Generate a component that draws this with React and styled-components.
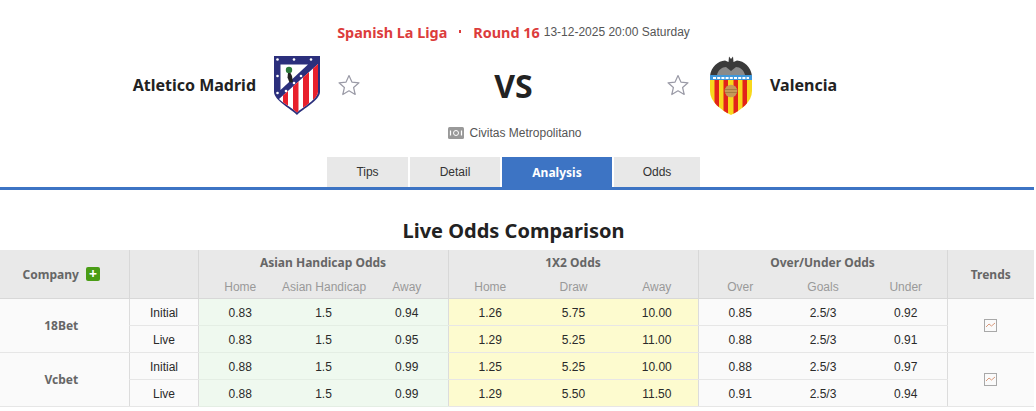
import React from 'react';
import styled, { createGlobalStyle } from 'styled-components';

const GlobalStyle = createGlobalStyle`
  html, body {
    margin: 0;
    padding: 0;
    background: #fff;
  }
  body {
    font-family: "Liberation Sans", Arial, sans-serif;
    font-size: 12px;
    color: #333;
  }
`;

const BOLD_FONT = '"Noto Sans", "DejaVu Sans", sans-serif';

const Page = styled.div`
  width: 1034px;
  height: 411px;
  overflow: hidden;
`;

const MatchHeader = styled.div`
  height: 187px;
  width: 1027px;
  display: flex;
  flex-direction: column;
  align-items: center;
  padding-top: 22px;
  box-sizing: border-box;
`;

const LeagueLine = styled.div`
  height: 20px;
  display: flex;
  align-items: center;
  font-size: 12px;
  color: #555;
  white-space: nowrap;
`;

const LeagueName = styled.span`
  font-family: ${BOLD_FONT};
  font-size: 14.4px;
  font-weight: 700;
  color: #dc3c3c;
`;

const Dot = styled.span`
  width: 2px;
  height: 3px;
  margin: 0 12px 2px 12px;
  background: #dc3c3c;
`;

const MatchTime = styled.span`
  margin-left: 4px;
`;

const TeamsRow = styled.div`
  margin-top: 13px;
  height: 60px;
  width: 100%;
  display: flex;
  align-items: center;
`;

const TeamSide = styled.div`
  flex: ${(props) => props.$grow};
  display: flex;
  align-items: center;
  justify-content: ${(props) => (props.$home ? 'flex-end' : 'flex-start')};
`;

const TeamName = styled.div`
  font-family: ${BOLD_FONT};
  font-size: 16px;
  font-weight: 700;
  color: #222;
  white-space: nowrap;
`;

const Crest = styled.svg`
  display: block;
  margin: ${(props) => props.$margin};
`;

const StarIcon = styled.svg`
  display: block;
  width: 24px;
  height: 24px;
`;

const Versus = styled.div`
  width: 305px;
  text-align: center;
  font-family: ${BOLD_FONT};
  font-size: 32px;
  font-weight: 700;
  color: #222;
`;

const Venue = styled.div`
  margin-top: 9px;
  height: 18px;
  display: flex;
  align-items: center;
  gap: 5px;
  margin-left: 3px;
  color: #555;
`;

const Tabs = styled.div`
  margin-top: 15px;
  display: flex;
  gap: 2px;
`;

const Tab = styled.div`
  width: ${(props) => props.$w}px;
  height: 30px;
  display: flex;
  align-items: center;
  justify-content: center;
  background: ${(props) => (props.$active ? '#3d74c4' : '#e8e8e8')};
  color: ${(props) => (props.$active ? '#fff' : '#333')};
  font-family: ${(props) => (props.$active ? BOLD_FONT : 'inherit')};
  font-weight: ${(props) => (props.$active ? 700 : 400)};
`;

const BlueLine = styled.div`
  height: 3px;
  background: #3d74c4;
`;

const SectionTitle = styled.h2`
  margin: 26px 0 0;
  padding-right: 7px;
  height: 34px;
  line-height: 30px;
  text-align: center;
  font-family: ${BOLD_FONT};
  font-size: 20px;
  font-weight: 700;
  color: #222;
`;

const OddsTable = styled.table`
  width: 1034px;
  table-layout: fixed;
  border-collapse: collapse;
`;

const HeadCell = styled.th`
  height: ${(props) => (props.$sub ? 23 : 24)}px;
  padding: ${(props) => (props.$sub ? '1px 0 0 1px' : 0)};
  background: #e9e9e9;
  white-space: nowrap;
  font-family: ${(props) => (props.$sub ? 'inherit' : BOLD_FONT)};
  font-weight: ${(props) => (props.$sub ? 400 : 700)};
  color: ${(props) => (props.$sub ? '#999' : '#666')};
  border-left: ${(props) => (props.$edge ? '1px solid #d8d8d8' : 'none')};
  border-bottom: ${(props) => (props.$sub || props.rowSpan ? '1px solid #d8d8d8' : 'none')};
`;

const CompanyHead = styled.span`
  display: inline-flex;
  align-items: center;
  gap: 7px;
  margin-right: 6px;
`;

const PlusBox = styled.span`
  width: 14px;
  height: 14px;
  border-radius: 2px;
  background: #4a9d16;
  color: #fff;
  font-size: 14px;
  line-height: 13px;
  font-weight: 700;
  text-align: center;
`;

const Cell = styled.td`
  height: 25px;
  padding: 1px 0 0 1px;
  text-align: center;
  background: ${(props) => props.$bg || '#fafafa'};
  color: #2a2a2a;
  border-bottom: 1px solid ${(props) => props.$line || '#e6e6e6'};
  border-left: ${(props) => (props.$edge ? '1px solid #dcdcdc' : 'none')};
`;

const CompanyCell = styled(Cell)`
  padding: 0 6px 0 0;
  height: 26px;
  font-family: ${BOLD_FONT};
  font-weight: 700;
  color: #666;
`;

const TrendCell = styled(Cell)`
  padding: 0;
  height: 26px;
`;

const TrendIcon = styled.svg`
  display: block;
  margin: 0 auto;
`;

const GREEN = '#eff9ef';
const YELLOW = '#fdfbcf';

const companies = [
  {
    name: '18Bet',
    rows: [
      ['Initial', '0.83', '1.5', '0.94', '1.26', '5.75', '10.00', '0.85', '2.5/3', '0.92'],
      ['Live', '0.83', '1.5', '0.95', '1.29', '5.25', '11.00', '0.88', '2.5/3', '0.91'],
    ],
  },
  {
    name: 'Vcbet',
    rows: [
      ['Initial', '0.88', '1.5', '0.99', '1.25', '5.25', '10.00', '0.88', '2.5/3', '0.97'],
      ['Live', '0.88', '1.5', '0.99', '1.29', '5.50', '11.50', '0.91', '2.5/3', '0.94'],
    ],
  },
];

const subHeads = [
  ['Home', true],
  ['Asian Handicap'],
  ['Away'],
  ['Home', true],
  ['Draw'],
  ['Away'],
  ['Over', true],
  ['Goals'],
  ['Under'],
];

const Star = () => (
  <StarIcon viewBox="0 0 24 24">
    <path
      d="M12 2.500l2.900 6.600 7.100.7-5.400 4.700 1.600 7-6.200-3.700-6.200 3.700 1.600-7L2 9.800l7.100-.7z"
      fill="#fff"
      stroke="#9a9aa6"
      strokeWidth="1.200"
      strokeLinejoin="round"
    />
  </StarIcon>
);

const AtleticoCrest = () => (
  <Crest width="48" height="60" viewBox="0 0 48 60" $margin="0 16px 0 17px">
    <defs>
      <clipPath id="atm-stripes">
        <path d="M45 9v27.500C45 44 30 52 24 57.500 19 53 10 48 6 44z" />
      </clipPath>
    </defs>
    <path d="M1 1h46v36c0 8-17 17-23 23C18 54 1 45 1 37z" fill="#2b2f7c" />
    <path d="M7.500 9.500H35L7.500 35z" fill="#fff" />
    <g clipPath="url(#atm-stripes)">
      <rect x="5" y="5" width="41" height="54" fill="#fff" />
      <path d="M40 5h6v54h-6zM30 5h6v54h-6zM20 5h5.500v54H20zM10 5h5v54h-5z" fill="#e8202c" />
    </g>
    <circle cx="16" cy="15" r="3.200" fill="#2c7a3a" />
    <path d="M15 18h2.500l1.500 3 1 6.500h-3.500l-2-5z" fill="#222" />
    <g fill="#fff">
      <circle cx="4.500" cy="4.500" r="1.300" />
      <circle cx="21" cy="4.500" r="1.300" />
      <circle cx="38" cy="4.500" r="1.300" />
      <circle cx="4.500" cy="21" r="1.300" />
      <circle cx="4.500" cy="38" r="1.300" />
      <circle cx="21" cy="28" r="1.300" />
      <circle cx="28" cy="21" r="1.300" />
      <circle cx="13" cy="36" r="1.300" />
    </g>
  </Crest>
);

const ValenciaCrest = () => (
  <Crest width="44" height="60" viewBox="0 0 44 60" $margin="0 17px 0 19px">
    <defs>
      <clipPath id="vcf-shield">
        <path d="M1 25h42v11C43 47 32 55 22 60 12 55 1 47 1 36z" />
      </clipPath>
    </defs>
    <path d="M1 21C2 12 9 6 16 5.500L19.500 7l.5-5.500 2 2.500 2-2.500.5 5.500L28 5.500C35 6 42 12 43 21z" fill="#3a3a3a" />
    <path d="M8 20c1-5 5-8 9-8l5 4 5-4c4 0 8 3 9 8z" fill="#8a8a8a" />
    <rect x="1" y="20" width="42" height="6" fill="#3f97da" />
    <path d="M4 23h36" stroke="#fff" strokeWidth="1.800" strokeDasharray="3 1.200" />
    <g clipPath="url(#vcf-shield)">
      <rect x="0" y="25" width="44" height="36" fill="#f8d81c" />
      <path d="M5.500 25H10v36H5.500zM14.500 25H19v36h-4.500zM24.500 25H29v36h-4.500zM33.500 25H38v36h-4.500z" fill="#e2231a" />
    </g>
    <circle cx="22" cy="36" r="6.300" fill="#c49a5a" />
    <path d="M16 34.500h12M16 37.500h12" stroke="#8d6a35" strokeWidth="0.600" />
  </Crest>
);

const StadiumIcon = () => (
  <svg width="16" height="12" viewBox="0 0 16 12">
    <rect width="16" height="12" rx="1.500" fill="#999" />
    <circle cx="8" cy="6" r="2.500" fill="none" stroke="#fff" strokeWidth="1" />
    <path d="M2.500 3.500v5M13.500 3.500v5" stroke="#fff" strokeWidth="1.200" />
  </svg>
);

const TrendChart = () => (
  <TrendIcon width="13" height="13" viewBox="0 0 13 13">
    <rect x="0.500" y="0.500" width="12" height="12" fill="none" stroke="#a8a8a8" />
    <path d="M2 8l3-3 2.500 2L11 4" fill="none" stroke="#d99a7c" strokeWidth="1" />
  </TrendIcon>
);

const columnWidths = [129, 69, 83, 84, 83, 83, 84, 83, 83, 83, 83, 87];

const cellBackground = (i) => {
  if (i >= 1 && i <= 3) return GREEN;
  if (i >= 4 && i <= 6) return YELLOW;
  return undefined;
};

const cellLine = (i) => {
  if (i >= 1 && i <= 3) return '#e4eee4';
  if (i >= 4 && i <= 6) return '#e8e6e6';
  return undefined;
};

const App = () => {
  return (
    <Page>
      <GlobalStyle />
      <MatchHeader>
        <LeagueLine>
          <LeagueName>Spanish La Liga</LeagueName>
          <Dot />
          <LeagueName>Round 16</LeagueName>
          <MatchTime>13-12-2025 20:00 Saturday</MatchTime>
        </LeagueLine>
        <TeamsRow>
          <TeamSide $home $grow="0 0 361px">
            <TeamName>Atletico Madrid</TeamName>
            <AtleticoCrest />
            <Star />
          </TeamSide>
          <Versus>VS</Versus>
          <TeamSide $grow="1">
            <Star />
            <ValenciaCrest />
            <TeamName>Valencia</TeamName>
          </TeamSide>
        </TeamsRow>
        <Venue>
          <StadiumIcon />
          Civitas Metropolitano
        </Venue>
        <Tabs>
          <Tab $w={81}>Tips</Tab>
          <Tab $w={90}>Detail</Tab>
          <Tab $w={110} $active>Analysis</Tab>
          <Tab $w={86}>Odds</Tab>
        </Tabs>
      </MatchHeader>
      <BlueLine />
      <SectionTitle>Live Odds Comparison</SectionTitle>
      <OddsTable>
        <colgroup>
          {columnWidths.map((w, i) => (
            <col key={i} style={{ width: w }} />
          ))}
        </colgroup>
        <thead>
          <tr>
            <HeadCell rowSpan={2}>
              <CompanyHead>
                Company <PlusBox>+</PlusBox>
              </CompanyHead>
            </HeadCell>
            <HeadCell rowSpan={2} $edge />
            <HeadCell colSpan={3} $edge>Asian Handicap Odds</HeadCell>
            <HeadCell colSpan={3} $edge>1X2 Odds</HeadCell>
            <HeadCell colSpan={3} $edge>Over/Under Odds</HeadCell>
            <HeadCell rowSpan={2} $edge>Trends</HeadCell>
          </tr>
          <tr>
            {subHeads.map(([label, edge], i) => (
              <HeadCell key={i} $sub $edge={edge}>{label}</HeadCell>
            ))}
          </tr>
        </thead>
        <tbody>
          {companies.map((company) =>
            company.rows.map((row, r) => (
              <tr key={company.name + r}>
                {r === 0 && <CompanyCell rowSpan={2}>{company.name}</CompanyCell>}
                {row.map((value, i) => (
                  <Cell
                    key={i}
                    $bg={cellBackground(i)}
                    $line={cellLine(i)}
                    $edge={i === 0 || i === 1 || i === 4 || i === 7}
                  >
                    {value}
                  </Cell>
                ))}
                {r === 0 && (
                  <TrendCell rowSpan={2} $edge>
                    <TrendChart />
                  </TrendCell>
                )}
              </tr>
            ))
          )}
        </tbody>
      </OddsTable>
    </Page>
  );
};

export default App;
